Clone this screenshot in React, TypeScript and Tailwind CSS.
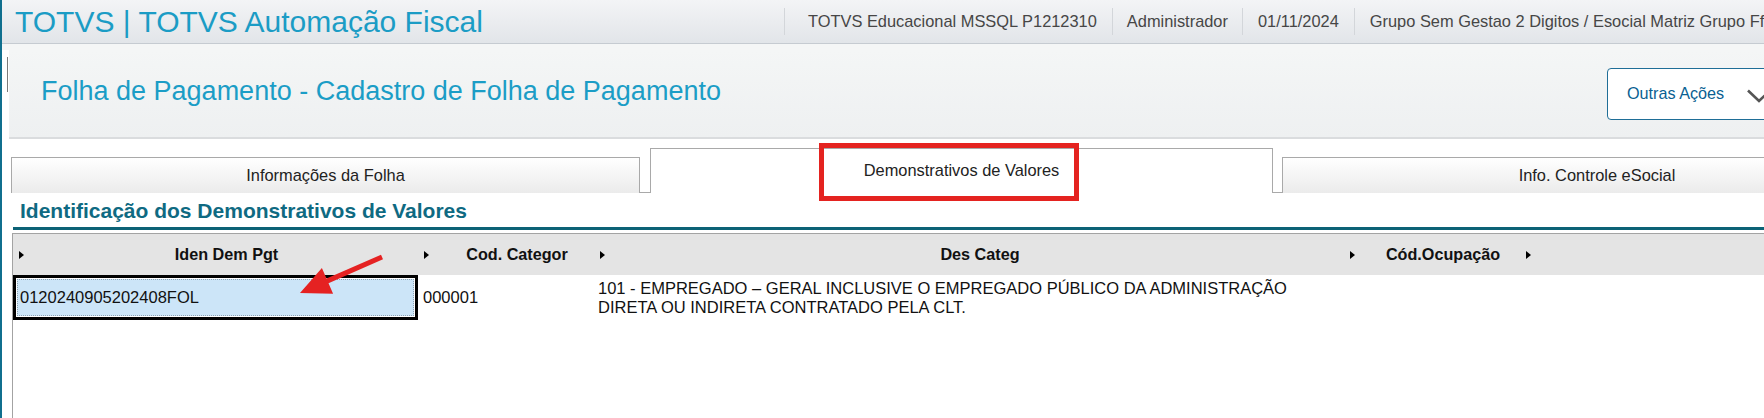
import React from 'react'

const font = "font-['Liberation_Sans',Arial,sans-serif]"

function Sep() {
  return <div className="w-px h-[27px] bg-[#d3d6da] shrink-0" />
}

function ColArrow() {
  return (
    <span className="absolute left-[6px] top-1/2 -translate-y-1/2 w-0 h-0 border-y-[4px] border-y-transparent border-l-[5px] border-l-black" />
  )
}

function HeadCell({ label, width }: { label: string; width: string }) {
  return (
    <div className={`relative shrink-0 h-full flex items-center justify-center pl-[22px] ${width}`}>
      <ColArrow />
      <span className="text-[16.2px] font-bold text-[#111] whitespace-nowrap">{label}</span>
    </div>
  )
}

export default function App() {
  return (
    <div className={`relative w-[1764px] h-[418px] overflow-hidden bg-white flex ${font}`}>
      {/* left accent bar */}
      <div className="w-[2px] shrink-0 bg-[#106f8e]" />

      <div className="flex-1 min-w-0 flex flex-col">
        {/* Top bar */}
        <header className="h-[44px] shrink-0 flex items-center border-b border-[#c6cbd1] bg-gradient-to-b from-[#f3f4f6] to-[#e2e5e9]">
          <div className="w-[782px] shrink-0 pl-[13px] text-[30px] leading-none text-[#1b9cc5] whitespace-nowrap">
            TOTVS | TOTVS Automação Fiscal
          </div>
          <div className="flex items-center shrink-0 text-[16.4px] text-[#464646] whitespace-nowrap">
            <Sep />
            <span className="pl-[23px] pr-[15px]">TOTVS Educacional MSSQL P1212310</span>
            <Sep />
            <span className="px-[14px]">Administrador</span>
            <Sep />
            <span className="px-[15px]">01/11/2024</span>
            <Sep />
            <span className="px-[15px]">Grupo Sem Gestao 2 Digitos / Esocial Matriz Grupo Ffff Ltda</span>
          </div>
        </header>

        <div className="h-[6px] shrink-0 bg-[#f5f6f6]" />

        {/* Page title panel */}
        <div className="flex h-[89px] shrink-0">
          <div className="w-[7px] shrink-0 pt-[7px] pl-[5px] bg-white">
            <div className="w-px h-[35px] bg-[#7a7a7a]" />
          </div>
          <div className="flex-1 min-w-0 flex items-center border-b-2 border-[#dadcde] bg-gradient-to-b from-[#f4f6f6] to-[#eef0f1]">
            <div className="flex-1 min-w-0 pl-[32px] mb-[5px] text-[27px] leading-none text-[#1b9dc6] whitespace-nowrap">
              Folha de Pagamento - Cadastro de Folha de Pagamento
            </div>
            <button className="w-[190px] h-[52px] shrink-0 mr-[-33px] flex items-center pl-[19px] gap-[23px] bg-white border border-[#1f6e97] rounded-[4px] text-[16.2px] text-[#0a5f92]">
              <span className="whitespace-nowrap">Outras Ações</span>
              <svg width="24" height="14" viewBox="0 0 24 14" className="shrink-0 mt-[4px]">
                <polyline points="1,1.5 12,12 23,1.5" fill="none" stroke="#555" strokeWidth="2.6" />
              </svg>
            </button>
          </div>
        </div>

        {/* Tabs */}
        <div className="mt-[9px] ml-[9px] h-[45px] shrink-0 flex items-end text-[16.4px] text-[#222]">
          <div className="w-[629px] h-[36px] shrink-0 flex items-center justify-center border border-b-0 border-[#a9a9a9] bg-gradient-to-b from-white to-[#ebebeb]">
            Informações da Folha
          </div>
          <div className="w-[10px] h-px shrink-0 bg-[#a9a9a9]" />
          <div className="relative w-[623px] h-[45px] shrink-0 flex items-center justify-center pb-[2px] border border-b-0 border-[#a9a9a9] bg-white">
            Demonstrativos de Valores
            <div className="absolute left-[168px] top-[-6px] w-[260px] h-[58px] border-[5px] border-[#e42320] pointer-events-none" />
          </div>
          <div className="w-[9px] h-px shrink-0 bg-[#a9a9a9]" />
          <div className="w-[630px] h-[36px] shrink-0 flex items-center justify-center border border-b-0 border-[#a9a9a9] bg-gradient-to-b from-white to-[#ebebeb]">
            Info. Controle eSocial
          </div>
        </div>

        {/* Section heading */}
        <div className="ml-[11px] shrink-0 pt-[7px] pb-[6px] pl-[7px] border-b-[3px] border-[#0c6276] text-[21px] leading-none font-bold text-[#0f6a82] whitespace-nowrap">
          Identificação dos Demonstrativos de Valores
        </div>

        {/* Grid */}
        <div className="mt-[3px] ml-[10px] flex-1 border-l border-t border-[#a3a3a3]">
          <div className="h-[41px] flex bg-[#e4e4e4]">
            <HeadCell label="Iden Dem Pgt" width="w-[405px]" />
            <HeadCell label="Cod. Categor" width="w-[176px]" />
            <HeadCell label="Des Categ" width="w-[750px]" />
            <HeadCell label="Cód.Ocupação" width="w-[176px]" />
            <div className="relative flex-1 h-full">
              <ColArrow />
            </div>
          </div>
          <div className="h-[45px] flex text-[16.5px] text-[#111]">
            <div className="w-[405px] shrink-0 border-[3px] border-black p-px">
              <div className="h-full flex items-center pl-[2px] bg-[#cce5f8] border border-dotted border-[#8fa3b3]">
                0120240905202408FOL
              </div>
            </div>
            <div className="w-[176px] shrink-0 flex items-center pl-[5px]">000001</div>
            <div className="w-[750px] shrink-0 flex items-center pl-[4px] leading-[18.5px] whitespace-nowrap">
              <span>
                101 - EMPREGADO – GERAL INCLUSIVE O EMPREGADO PÚBLICO DA ADMINISTRAÇÃO
                <br />
                DIRETA OU INDIRETA CONTRATADO PELA CLT.
              </span>
            </div>
          </div>
        </div>
      </div>

      {/* red annotation arrow */}
      <svg className="absolute left-[290px] top-[250px] pointer-events-none" width="100" height="50" viewBox="0 0 100 50">
        <polygon
          points="10,43 31.9,18.1 36.5,28.6 91,4.7 93,9.3 38.5,33.2 43.1,43.7"
          fill="#e52222"
        />
      </svg>
    </div>
  )
}
